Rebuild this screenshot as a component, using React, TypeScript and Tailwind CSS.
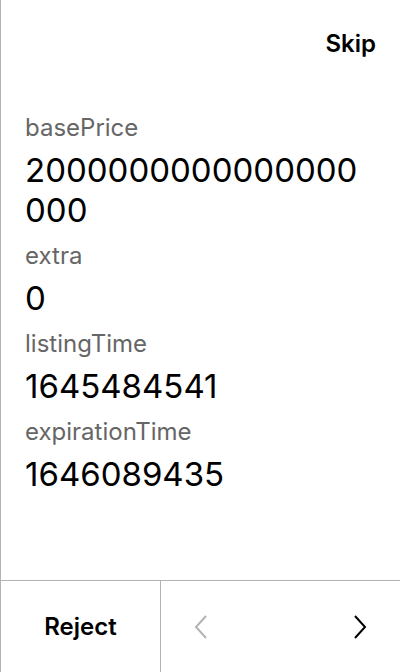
import React from "react";

const rows = [
  { label: "basePrice", value: "2000000000000000000" },
  { label: "extra", value: "0" },
  { label: "listingTime", value: "1645484541" },
  { label: "expirationTime", value: "1646089435" },
];

export default function App() {
  return (
    <div
      className="w-[400px] h-[672px] flex flex-col bg-white border-l border-[#b3b3b3] text-black"
      style={{ fontFamily: "Inter, 'Noto Sans', sans-serif" }}
    >
      <div className="flex-1 flex flex-col px-6">
        <div className="flex justify-end pt-[30px] h-[60px]">
          <span className="text-[24px] leading-[28px] font-semibold">Skip</span>
        </div>
        <div className="flex flex-col pt-[54px]">
          {rows.map((r) => (
            <div key={r.label} className="flex flex-col mb-[12px]">
              <div className="text-[24px] leading-[28px] text-[#666666] mb-[8px]">{r.label}</div>
              <div className="text-[33px] leading-[40px] break-all max-w-[342px]">{r.value}</div>
            </div>
          ))}
        </div>
      </div>
      <div className="h-[92px] flex border-t border-[#b3b3b3]">
        <div className="w-[160px] flex items-center justify-center border-r border-[#b3b3b3]">
          <span className="text-[24px] font-semibold">Reject</span>
        </div>
        <div className="flex-1 flex items-center justify-between px-[32px]">
          <svg width="16" height="26" viewBox="0 0 16 26" fill="none">
            <path d="M13 2 L3 13 L13 24" stroke="#b3b3b3" strokeWidth="2" />
          </svg>
          <svg width="16" height="26" viewBox="0 0 16 26" fill="none">
            <path d="M3 2 L13 13 L3 24" stroke="#000" strokeWidth="2" />
          </svg>
        </div>
      </div>
    </div>
  );
}
